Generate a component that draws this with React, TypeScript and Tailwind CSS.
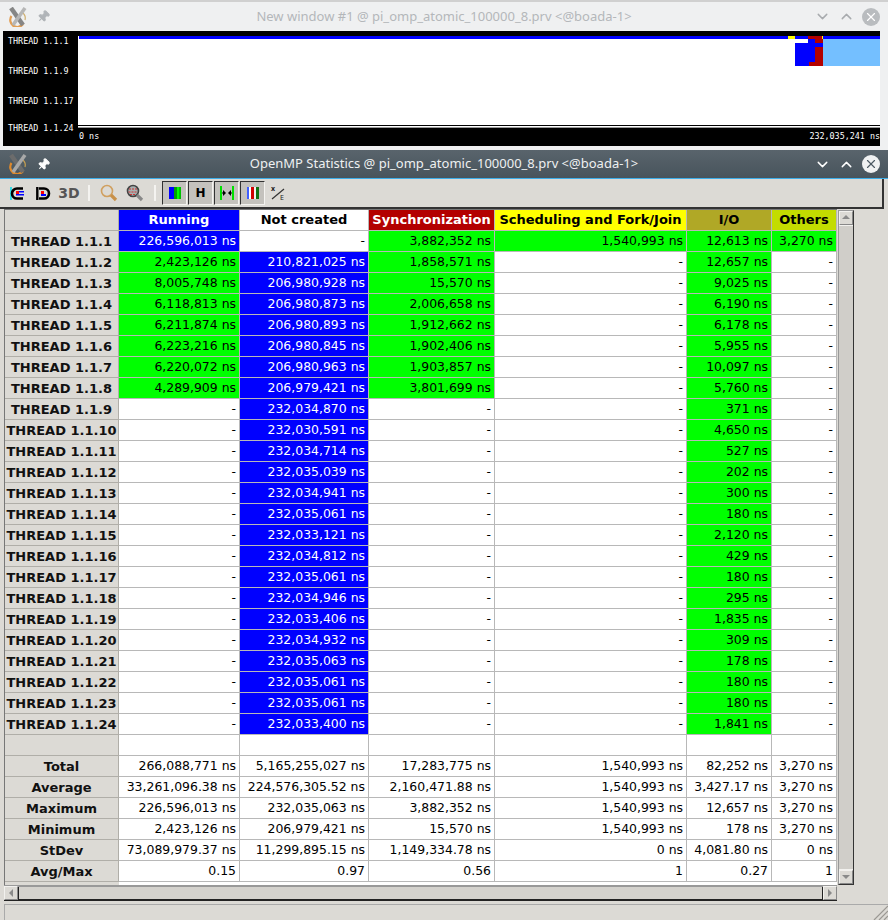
import { ChevronDown, ChevronUp, Pin, X } from 'lucide-react';

const COLS = ['Running', 'Not created', 'Synchronization', 'Scheduling and Fork/Join', 'I/O', 'Others'];

const HEAD_COLOR = [
  'bg-[#0000ff] text-white',
  'bg-white text-black',
  'bg-[#b30000] text-white',
  'bg-[#ffff00] text-black',
  'bg-[#b0a826] text-black',
  'bg-[#c3dc00] text-black',
];

// running, not created, sync, sched, io, others
const ROWS: string[][] = [
  ['226,596,013', '', '3,882,352', '1,540,993', '12,613', '3,270'],
  ['2,423,126', '210,821,025', '1,858,571', '', '12,657', ''],
  ['8,005,748', '206,980,928', '15,570', '', '9,025', ''],
  ['6,118,813', '206,980,873', '2,006,658', '', '6,190', ''],
  ['6,211,874', '206,980,893', '1,912,662', '', '6,178', ''],
  ['6,223,216', '206,980,845', '1,902,406', '', '5,955', ''],
  ['6,220,072', '206,980,963', '1,903,857', '', '10,097', ''],
  ['4,289,909', '206,979,421', '3,801,699', '', '5,760', ''],
  ['', '232,034,870', '', '', '371', ''],
  ['', '232,030,591', '', '', '4,650', ''],
  ['', '232,034,714', '', '', '527', ''],
  ['', '232,035,039', '', '', '202', ''],
  ['', '232,034,941', '', '', '300', ''],
  ['', '232,035,061', '', '', '180', ''],
  ['', '232,033,121', '', '', '2,120', ''],
  ['', '232,034,812', '', '', '429', ''],
  ['', '232,035,061', '', '', '180', ''],
  ['', '232,034,946', '', '', '295', ''],
  ['', '232,033,406', '', '', '1,835', ''],
  ['', '232,034,932', '', '', '309', ''],
  ['', '232,035,063', '', '', '178', ''],
  ['', '232,035,061', '', '', '180', ''],
  ['', '232,035,061', '', '', '180', ''],
  ['', '232,033,400', '', '', '1,841', ''],
];

const STATS: [string, string[]][] = [
  ['Total', ['266,088,771 ns', '5,165,255,027 ns', '17,283,775 ns', '1,540,993 ns', '82,252 ns', '3,270 ns']],
  ['Average', ['33,261,096.38 ns', '224,576,305.52 ns', '2,160,471.88 ns', '1,540,993 ns', '3,427.17 ns', '3,270 ns']],
  ['Maximum', ['226,596,013 ns', '232,035,063 ns', '3,882,352 ns', '1,540,993 ns', '12,657 ns', '3,270 ns']],
  ['Minimum', ['2,423,126 ns', '206,979,421 ns', '15,570 ns', '1,540,993 ns', '178 ns', '3,270 ns']],
  ['StDev', ['73,089,979.37 ns', '11,299,895.15 ns', '1,149,334.78 ns', '0 ns', '4,081.80 ns', '0 ns']],
  ['Avg/Max', ['0.15', '0.97', '0.56', '1', '0.27', '1']],
];

function AppLogo({ dim }: { dim?: boolean }) {
  return (
    <svg width="20" height="20" viewBox="0 0 20 20" className={dim ? 'opacity-80' : ''}>
      <path d="M3.5 9 A7 7 0 0 0 15 17" fill="none" stroke="#e08a2c" strokeWidth="2.2" />
      <path d="M15 6 A7 7 0 0 1 17 13" fill="none" stroke="#c8a050" strokeWidth="1.2" />
      <path d="M3 1 L15 18" stroke="#6c6c6c" strokeWidth="4.5" />
      <path d="M17 1 L5 18" stroke="#a8a8a8" strokeWidth="3.5" />
    </svg>
  );
}

function Scrollbtn({ dir }: { dir: 'up' | 'down' | 'left' | 'right' }) {
  const pts = { up: '2,7 10,7 6,3', down: '2,4 10,4 6,8', left: '8,2 8,10 4,6', right: '4,2 4,10 8,6' }[dir];
  return (
    <div className="flex h-[14px] w-[14px] items-center justify-center border border-[#f2f1ee] border-r-[#888] border-b-[#888] bg-[#dcdad5]">
      <svg width="12" height="12" viewBox="0 0 12 12">
        <polygon points={pts} fill="#8a8a8a" />
      </svg>
    </div>
  );
}

function Trace() {
  return (
    <svg width="802" height="92" viewBox="78 36 802 92" className="block">
      <rect x="78" y="36" width="802" height="90" fill="#fff" />
      <rect x="79" y="36" width="709" height="3" fill="#0000ff" />
      <rect x="788" y="36" width="7" height="3" fill="#ffff00" />
      <rect x="795" y="36" width="13" height="3" fill="#0000ff" />
      <rect x="808" y="36" width="14" height="3" fill="#b30000" />
      <rect x="822" y="36" width="1" height="3" fill="#ffff00" />
      <rect x="823" y="36" width="57" height="3" fill="#0000ff" />
      <rect x="823" y="39" width="57" height="27" fill="#74bfff" />
      <rect x="808" y="39" width="7" height="4" fill="#0000ff" />
      <rect x="815" y="39" width="8" height="4" fill="#b30000" />
      <rect x="795" y="43" width="28" height="4" fill="#0000ff" />
      <rect x="795" y="47" width="20" height="15" fill="#0000ff" />
      <rect x="815" y="47" width="8" height="19" fill="#b30000" />
      <rect x="795" y="62" width="14" height="4" fill="#0000ff" />
      <rect x="809" y="62" width="6" height="4" fill="#b30000" />
      <rect x="78" y="125" width="802" height="1" fill="#000" />
      <rect x="78" y="126" width="802" height="1.6" fill="#fff" />
    </svg>
  );
}

function TopWindow() {
  const labels = ['THREAD 1.1.1', 'THREAD 1.1.9', 'THREAD 1.1.17', 'THREAD 1.1.24'];
  return (
    <div className="h-[150px] shrink-0 border-t-2 border-[#d0d0d0] bg-[#eff0f1]">
      <div className="flex h-[29px] items-center px-2">
        <AppLogo dim />
        <Pin size={13} className="ml-[9px] rotate-45 fill-[#b0b4b8] text-[#b0b4b8]" />
        <span className="flex-1 pl-[24px] text-center text-[13px] text-[#b4b7ba]">New window #1 @ pi_omp_atomic_100000_8.prv &lt;@boada-1&gt;</span>
        <ChevronDown size={17} className="text-[#a8abae]" />
        <ChevronUp size={17} className="ml-[7px] text-[#a8abae]" />
        <div className="ml-[7px] flex h-[18px] w-[18px] items-center justify-center rounded-full bg-[#b9bcbf]">
          <X size={14} className="text-white" />
        </div>
      </div>
      <div className="ml-[3px] flex h-[115px] w-[877px] bg-black font-['DejaVu_Sans_Mono',monospace] text-[8.4px] leading-none text-white">
        <div className="flex w-[75px] flex-col pl-[5px] pt-[6px]">
          <span className="h-[30px]">{labels[0]}</span>
          <span className="h-[30px]">{labels[1]}</span>
          <span className="h-[27px]">{labels[2]}</span>
          <span>{labels[3]}</span>
        </div>
        <div className="flex flex-col">
          <div className="pt-[5px]">
            <Trace />
          </div>
          <div className="flex w-[802px] justify-between pl-[1px] pt-[4px]">
            <span>0 ns</span>
            <span>232,035,241 ns</span>
          </div>
        </div>
      </div>
    </div>
  );
}

function ToolIcon({ kind }: { kind: string }) {
  if (kind === 'C')
    return (
      <svg width="15" height="15" viewBox="0 0 15 15">
        <path d="M1 1v13" stroke="#00d8e8" strokeWidth="1.5" />
        <path d="M13 2.5H7a5 5 0 0 0 0 10h6" fill="none" stroke="#000" strokeWidth="2.6" />
        <rect x="6" y="5" width="3" height="3" fill="#ff0000" />
        <rect x="9" y="5" width="5" height="1.5" fill="#0000ff" />
        <rect x="6" y="8" width="8" height="1.5" fill="#0000ff" />
      </svg>
    );
  if (kind === 'D')
    return (
      <svg width="15" height="15" viewBox="0 0 15 15">
        <path d="M1.3 1v13" stroke="#000" strokeWidth="2.4" />
        <path d="M3 2.5H8a5 5 0 0 1 0 10H3" fill="none" stroke="#000" strokeWidth="2.6" />
        <rect x="5" y="5" width="3" height="3" fill="#ff0000" />
        <rect x="5" y="8" width="5" height="2" fill="#0000ff" />
      </svg>
    );
  if (kind === '3D') return <span className="font-['DejaVu_Sans',sans-serif] text-[14px] font-bold leading-none text-[#555]">3D</span>;
  if (kind === 'glass' || kind === 'glass2')
    return (
      <svg width="18" height="18" viewBox="0 0 18 18">
        <circle cx="7" cy="7" r="5.5" fill={kind === 'glass2' ? '#a8b0b0' : 'none'} stroke={kind === 'glass2' ? '#444' : '#d0a060'} strokeWidth="1.6" />
        {kind === 'glass2' && <path d="M3 5h8M2.5 8h9M4 10.5h6" stroke="#c33" strokeWidth="1" strokeDasharray="2 1" />}
        <path d="M11 11 L16 16" stroke={kind === 'glass2' ? '#888' : '#c89048'} strokeWidth="3.2" />
      </svg>
    );
  if (kind === 'bars')
    return (
      <svg width="14" height="14" viewBox="0 0 14 14">
        <rect x="1" y="1" width="5" height="12" fill="#0000ff" />
        <rect x="6" y="1" width="3" height="12" fill="#00a000" />
        <rect x="9" y="1" width="2" height="12" fill="#00ff00" />
        <rect x="11" y="1" width="2" height="12" fill="#00c000" />
      </svg>
    );
  if (kind === 'H') return <span className="font-['DejaVu_Sans',sans-serif] text-[12px] font-bold leading-none text-black">H</span>;
  if (kind === 'fit')
    return (
      <svg width="14" height="14" viewBox="0 0 14 14">
        <rect x="0" y="0" width="2" height="14" fill="#00e000" />
        <rect x="12" y="0" width="2" height="14" fill="#00e000" />
        <path d="M2 7h3M9 7h3" stroke="#000" strokeWidth="1" />
        <polygon points="3,4 3,10 6,7" fill="#000" />
        <polygon points="11,4 11,10 8,7" fill="#000" />
      </svg>
    );
  if (kind === 'color')
    return (
      <svg width="14" height="14" viewBox="0 0 14 14">
        <rect x="1" y="1" width="2" height="12" fill="#4060ff" />
        <rect x="3" y="1" width="2" height="12" fill="#fff" />
        <rect x="5" y="1" width="3" height="12" fill="#d00000" />
        <rect x="8" y="1" width="2" height="12" fill="#f0f0f0" />
        <rect x="10" y="1" width="3" height="12" fill="#107010" />
      </svg>
    );
  return (
    <svg width="16" height="17" viewBox="0 0 16 17">
      <path d="M2 14 L14 4" stroke="#333" strokeWidth="1.2" />
      <text x="1" y="6" fontSize="7" fontWeight="700" fill="#222">x</text>
      <text x="10" y="15" fontSize="7" fill="#222">E</text>
    </svg>
  );
}

function Toolbar() {
  const pressed = ['bars', 'H', 'fit', 'color'];
  return (
    <div className="flex h-[30px] w-[884px] items-center border-b-2 border-r-2 border-[#333] pl-[4px]">
      {['C', 'D', '3D'].map((k) => (
        <div key={k} className="flex h-[24px] w-[26px] items-center justify-center">
          <ToolIcon kind={k} />
        </div>
      ))}
      <div className="mx-[6px] h-[16px] w-[2px] bg-[#f4f3f0]" />
      {['glass', 'glass2'].map((k) => (
        <div key={k} className="flex h-[24px] w-[26px] items-center justify-center">
          <ToolIcon kind={k} />
        </div>
      ))}
      <div className="mx-[6px] h-[16px] w-[2px] bg-[#f4f3f0]" />
      {pressed.map((k) => (
        <div key={k} className="mr-[1px] flex h-[24px] w-[25px] items-center justify-center border border-[#333] border-b-[#f4f3f0] border-r-[#f4f3f0] bg-[#c4c2bd]">
          <ToolIcon kind={k} />
        </div>
      ))}
      <div className="flex h-[24px] w-[24px] items-center justify-center">
        <ToolIcon kind="stats" />
      </div>
    </div>
  );
}

function Cell({ value, tone }: { value: string; tone: string }) {
  return (
    <div className={`flex items-center justify-end overflow-hidden whitespace-nowrap border-b border-r border-[#b8b8b8] pr-[3px] ${tone}`}>
      {value}
    </div>
  );
}

function RowHead({ label }: { label: string }) {
  return (
    <div className="flex items-center justify-center whitespace-nowrap border-b border-r border-[#b0aea8] bg-[#dcdad5] text-[13px] font-bold text-[#111]">
      {label}
    </div>
  );
}

function StatsTable() {
  return (
    <div className="grid w-[832px] auto-rows-[21px] grid-cols-[114px_121px_129px_126px_192px_85px_65px] bg-white font-['DejaVu_Sans',sans-serif] text-[12.45px] leading-none text-[#111]">
      <div className="border-b border-r border-[#b0aea8] bg-[#dcdad5]" />
      {COLS.map((c, i) => (
        <div key={c} className={`flex items-center justify-center whitespace-nowrap border-b border-r border-[#b8b8b8] pb-[2px] text-[13px] font-bold ${HEAD_COLOR[i]}`}>
          {c}
        </div>
      ))}
      {ROWS.map((row, r) => [
        <RowHead key={`h${r}`} label={`THREAD 1.1.${r + 1}`} />,
        ...row.map((v, c) => {
          const tone = !v ? 'bg-white text-black' : c === 0 && r === 0 ? 'bg-[#0000ff] text-white' : c === 1 ? 'bg-[#0000ff] text-white' : 'bg-[#00ff00] text-black';
          return <Cell key={`${r}-${c}`} value={v ? `${v} ns` : '-'} tone={tone} />;
        }),
      ])}
      <div className="border-b border-r border-[#b0aea8] bg-[#dcdad5]" />
      {COLS.map((c) => (
        <Cell key={`blank-${c}`} value="" tone="bg-white" />
      ))}
      {STATS.map(([name, vals]) => [
        <RowHead key={name} label={name} />,
        ...vals.map((v, c) => <Cell key={`${name}-${c}`} value={v} tone="bg-white text-black" />),
      ])}
    </div>
  );
}

function BottomWindow() {
  return (
    <div className="flex flex-1 flex-col bg-[#dcdad5]">
      <div className="flex h-[28px] shrink-0 items-center bg-gradient-to-b from-[#59646c] to-[#48545c] px-2">
        <AppLogo />
        <Pin size={13} className="ml-[9px] rotate-45 fill-white text-white" />
        <span className="flex-1 pl-[24px] text-center font-['Noto_Sans',sans-serif] text-[13px] text-[#eef0f1]">OpenMP Statistics @ pi_omp_atomic_100000_8.prv &lt;@boada-1&gt;</span>
        <ChevronDown size={17} className="text-white" />
        <ChevronUp size={17} className="ml-[7px] text-white" />
        <div className="ml-[7px] flex h-[18px] w-[18px] items-center justify-center rounded-full bg-[#f0f1f2]">
          <X size={14} className="text-[#4d5a63]" />
        </div>
      </div>
      <div className="h-[1px] shrink-0 bg-[#3daee9]" />
      <Toolbar />
      <div className="ml-[4px] flex gap-[1px]">
        <div className="border-l border-t border-[#777]">
          <StatsTable />
          <div className="ml-[114px] h-[3px] bg-white" />
        </div>
        <div className="mt-[1px] flex h-[675px] w-[16px] flex-col border border-[#333] border-l-[#999] border-t-[#999] bg-[#d0cec9]">
          <Scrollbtn dir="up" />
          <div className="flex-1 border-y border-[#f2f1ee]" />
          <Scrollbtn dir="down" />
        </div>
      </div>
      <div className="ml-[4px] flex h-[16px] w-[833px] items-center justify-between border-y-2 border-t-[#999] border-b-[#222] bg-[#d4d2cd]">
        <Scrollbtn dir="left" />
        <div className="h-full flex-1 border-x border-[#222]" />
        <Scrollbtn dir="right" />
      </div>
      <div className="relative mt-[3px] ml-[4px] flex-1 border-l border-t border-[#aaa]">
        <svg width="16" height="16" viewBox="0 0 16 16" className="absolute bottom-0 right-0">
          <path d="M2 16 L16 2 M7 16 L16 7 M12 16 L16 12" stroke="#9a9893" strokeWidth="1.2" />
        </svg>
      </div>
    </div>
  );
}

export default function App() {
  return (
    <div className="flex h-[920px] w-[888px] flex-col overflow-hidden bg-white font-['Noto_Sans',sans-serif]">
      <TopWindow />
      <BottomWindow />
    </div>
  );
}
